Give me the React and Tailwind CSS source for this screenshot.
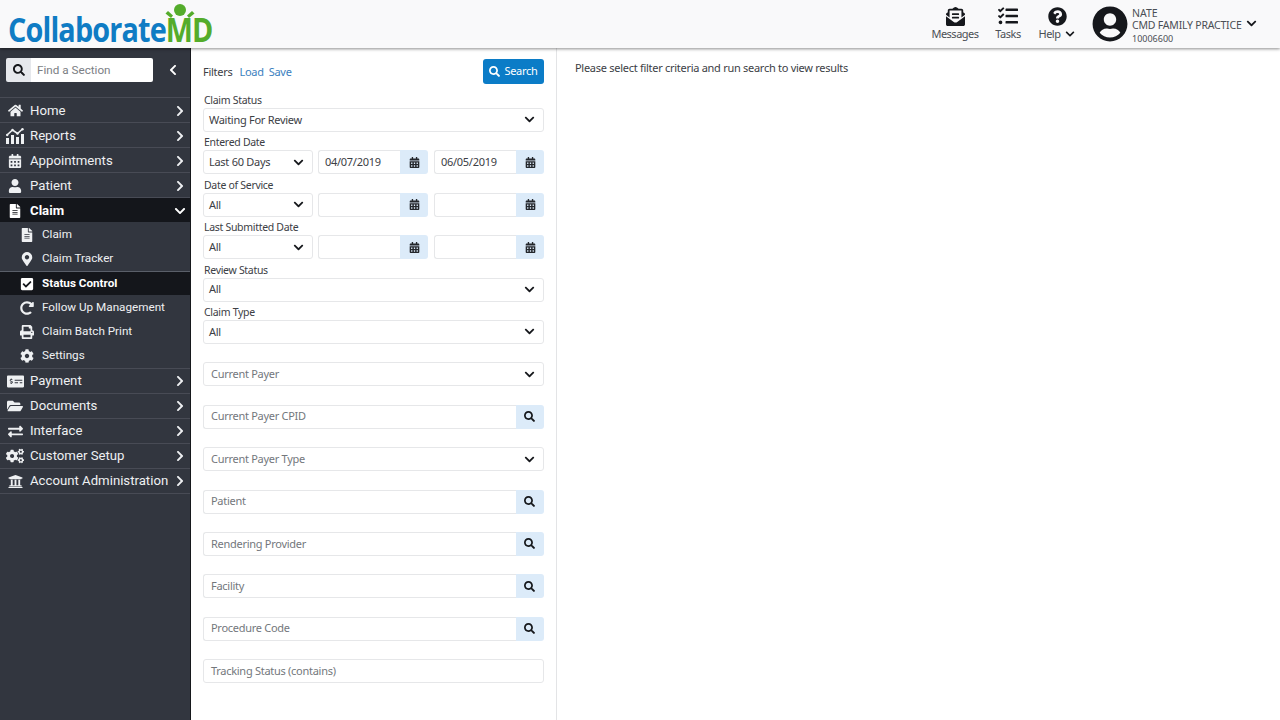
import React from "react";
import { FaHome, FaCalendarAlt, FaUser, FaFileAlt, FaMapMarkerAlt, FaCheckSquare, FaRedoAlt, FaPrint, FaCog, FaMoneyCheckAlt, FaFolderOpen, FaExchangeAlt, FaCogs, FaUniversity, FaEnvelopeOpenText, FaTasks, FaQuestionCircle, FaUserCircle, FaSearch, FaChevronRight, FaChevronDown, FaChevronLeft } from "react-icons/fa";

const plex = "font-['Noto_Sans',sans-serif]";

function ReportsIcon() {
  return (
    <svg viewBox="0 0 18 16" className="w-[18px] h-[16px]" fill="currentColor">
      <rect x="0" y="10" width="3" height="6" />
      <rect x="5" y="7" width="3" height="9" />
      <rect x="10" y="9" width="3" height="7" />
      <rect x="15" y="6" width="3" height="10" />
      <path d="M1 7 L6.5 2 L11.5 5.5 L16.5 1" fill="none" stroke="currentColor" strokeWidth="1.6" />
      <circle cx="1.2" cy="7" r="1.2" />
      <circle cx="6.5" cy="2" r="1.2" />
      <circle cx="11.5" cy="5.5" r="1.2" />
      <circle cx="16.5" cy="1.2" r="1.2" />
    </svg>
  );
}

function Logo() {
  return (
    <div className="relative ml-2 mt-[3px] h-[45px] w-[206px]">
      <div className="absolute left-0 top-[6px] text-[33.5px] leading-[40px] font-bold tracking-[-1px] font-['Open_Sans',sans-serif] whitespace-nowrap scale-x-[0.86] origin-left">
        <span className="text-[#0f7cc4]">Collaborate</span>
        <span className="text-[#54ac2b]">MD</span>
      </div>
      <svg viewBox="0 0 30 22" className="absolute left-[157px] top-[0px] w-[30px] h-[22px]" fill="#54ac2b">
        <circle cx="15" cy="7" r="6" />
        <path d="M0.5 10.5 L3 8 L8 12.5 L6 15 Z" />
        <path d="M29.5 10.5 L27 8 L22 12.5 L24 15 Z" />
      </svg>
    </div>
  );
}

function TopAction({ icon, label, chevron, w }) {
  return (
    <div className={`flex flex-col items-center ${w}`}>
      <span className="h-[20px] flex items-center text-[#16181c]">{icon}</span>
      <span className="text-[11px] tracking-[-0.5px] leading-[14px] text-[#4b4f55] mt-[1px] flex items-center gap-[5px]">
        {label}
        {chevron && <FaChevronDown className="text-[10px] text-[#16181c]" />}
      </span>
    </div>
  );
}

function Header() {
  return (
    <header className={`h-[48px] shrink-0 bg-[#f9f9fa] flex justify-between shadow-[0_1px_3px_rgba(0,0,0,0.45)] relative z-10 ${plex}`}>
      <Logo />
      <div className="flex items-start pt-[6px] gap-[15px]">
        <TopAction w="w-[48px]" label="Messages" icon={<FaEnvelopeOpenText className="text-[19px]" />} />
        <TopAction w="w-[28px]" label="Tasks" icon={<FaTasks className="text-[20px]" />} />
        <TopAction w="w-[40px]" label="Help" chevron icon={<FaQuestionCircle className="text-[19px]" />} />
        <div className="flex">
          <FaUserCircle className="text-[36px] text-[#16181c]" />
          <div className="ml-[4px] w-[148px] relative text-[#4b4f55]">
            <div className="text-[10.5px] leading-[12px] mt-[1px]">NATE</div>
            <div className="text-[10.5px] tracking-[-0.2px] leading-[13px]">CMD FAMILY PRACTICE</div>
            <div className="text-[9px] leading-[13px]">10006600</div>
            <FaChevronDown className="absolute left-[114px] top-[12px] text-[11px] text-[#16181c]" />
          </div>
        </div>
      </div>
    </header>
  );
}

function MainItem({ icon, label, open }) {
  return (
    <div className={`flex items-center h-[25px] pt-[1px] border-t border-[#484b55] pl-[6px] pr-[4px] text-[13.2px] ${open ? "bg-[#14161b] font-bold text-white" : "text-[#eef0f2]"}`}>
      <span className="w-[18px] flex justify-center shrink-0">{icon}</span>
      <span className="ml-[6px] flex-1 whitespace-nowrap">{label}</span>
      {open ? <FaChevronDown className="text-[12px]" /> : <FaChevronRight className="text-[12px]" />}
    </div>
  );
}

function SubItem({ icon, label, active }) {
  return (
    <div className={`flex items-center h-[24.3px] pt-[1px] pl-[19px] text-[11.7px] ${active ? "bg-[#14161b] font-bold text-white border-t border-[#5a5f69]" : "text-[#eef0f2]"}`}>
      <span className="w-[16px] flex justify-center shrink-0 text-[14px]">{icon}</span>
      <span className="ml-[7px] whitespace-nowrap">{label}</span>
    </div>
  );
}

function Sidebar() {
  return (
    <aside className="w-[191px] shrink-0 bg-[#32363f] border-r border-[#16181c] font-['Roboto',sans-serif]">
      <div className="h-[49px] flex items-start pt-[10px] pl-[6px]">
        <div className="flex h-[24px] w-[147px] rounded-[2px] overflow-hidden">
          <span className="w-[25px] bg-[#e6e8ec] flex items-center justify-center text-[#16181c]"><FaSearch className="text-[12px]" /></span>
          <span className="flex-1 bg-white text-[11.7px] leading-[24px] pl-[6px] text-[#7b7e83]">Find a Section</span>
        </div>
        <FaChevronLeft className="text-[12px] text-white ml-[14px] mt-[6px]" />
      </div>
      <MainItem icon={<FaHome className="text-[15px]" />} label="Home" />
      <MainItem icon={<ReportsIcon />} label="Reports" />
      <MainItem icon={<FaCalendarAlt className="text-[14px]" />} label="Appointments" />
      <MainItem icon={<FaUser className="text-[14px]" />} label="Patient" />
      <MainItem icon={<FaFileAlt className="text-[14px]" />} label="Claim" open />
      <SubItem icon={<FaFileAlt />} label="Claim" />
      <SubItem icon={<FaMapMarkerAlt />} label="Claim Tracker" />
      <SubItem icon={<FaCheckSquare />} label="Status Control" active />
      <SubItem icon={<FaRedoAlt />} label="Follow Up Management" />
      <SubItem icon={<FaPrint />} label="Claim Batch Print" />
      <SubItem icon={<FaCog />} label="Settings" />
      <MainItem icon={<FaMoneyCheckAlt className="text-[17px]" />} label="Payment" />
      <MainItem icon={<FaFolderOpen className="text-[16px]" />} label="Documents" />
      <MainItem icon={<FaExchangeAlt className="text-[15px]" />} label="Interface" />
      <MainItem icon={<FaCogs className="text-[18px]" />} label="Customer Setup" />
      <MainItem icon={<FaUniversity className="text-[15px]" />} label="Account Administration" />
      <div className="border-t border-[#484b55]" />
    </aside>
  );
}

const text = "text-[11px] tracking-[-0.28px]";
const box = `h-[24px] bg-white border border-[#e6e7e9] rounded-[3px] flex items-center ${text}`;

function Select({ value, placeholder, className = "" }) {
  return (
    <div className={`${box} pl-[5px] pr-[8px] justify-between ${className}`}>
      <span className={placeholder ? "text-[#73777c] pl-[2px]" : "text-[#3c4045]"}>{value}</span>
      <FaChevronDown className="text-[11px] text-[#16181c]" />
    </div>
  );
}

function Addon({ children }) {
  return <span className="w-[28px] h-[24px] bg-[#dcebf9] rounded-r-[3px] flex items-center justify-center text-[#16181c]">{children}</span>;
}

function DateInput({ value, className }) {
  return (
    <div className={`flex w-[110px] ${className}`}>
      <div className={`h-[24px] flex-1 flex items-center bg-white border border-r-0 border-[#e6e7e9] rounded-l-[3px] pl-[6px] text-[#3c4045] ${text}`}>{value}</div>
      <Addon><FaCalendarAlt className="text-[11px] text-[#24272c]" /></Addon>
    </div>
  );
}

function SearchInput({ placeholder }) {
  return (
    <div className="flex">
      <div className={`h-[24px] flex-1 flex items-center bg-white border border-r-0 border-[#e6e7e9] rounded-l-[3px] pl-[7px] text-[#73777c] ${text}`}>{placeholder}</div>
      <Addon><FaSearch className="text-[11px] -ml-[1px]" /></Addon>
    </div>
  );
}

function Labeled({ label, children }) {
  return (
    <div className="h-[42.4px] flex flex-col justify-end">
      <div className="text-[10.5px] tracking-[-0.3px] leading-[14px] mb-[1px] pl-[1px] text-[#3c4045]">{label}</div>
      {children}
    </div>
  );
}

function DateRow({ label, sel, from, to }) {
  return (
    <Labeled label={label}>
      <div className="flex">
        <Select value={sel} className="w-[110px]" />
        <DateInput value={from} className="ml-[5px]" />
        <DateInput value={to} className="ml-[6px]" />
      </div>
    </Labeled>
  );
}

function Spaced({ children }) {
  return <div className="h-[42.4px] flex flex-col justify-end">{children}</div>;
}

function Filters() {
  return (
    <section className={`w-[366px] shrink-0 border-r border-[#e3e4e6] pl-[12px] pr-[12px] pt-[11px] ${plex}`}>
      <div className="flex items-center justify-between h-[25px]">
        <div className={`flex pt-[2px] ${text}`}>
          <span className="text-[#3c4045]">Filters</span>
          <span className="text-[#3b7fc0] ml-[7px]">Load</span>
          <span className="text-[#3b7fc0] ml-[5px]">Save</span>
        </div>
        <div className={`h-[25px] w-[61px] rounded-[3px] bg-[#0b7cc7] text-white flex items-center justify-center gap-[4px] ${text}`}>
          <FaSearch className="text-[11px]" /> Search
        </div>
      </div>
      <div className="mt-[5.6px]">
        <Labeled label="Claim Status"><Select value="Waiting For Review" /></Labeled>
        <DateRow label="Entered Date" sel="Last 60 Days" from="04/07/2019" to="06/05/2019" />
        <DateRow label="Date of Service" sel="All" />
        <DateRow label="Last Submitted Date" sel="All" />
        <Labeled label="Review Status"><Select value="All" /></Labeled>
        <Labeled label="Claim Type"><Select value="All" /></Labeled>
        <Spaced><Select value="Current Payer" placeholder /></Spaced>
        <Spaced><SearchInput placeholder="Current Payer CPID" /></Spaced>
        <Spaced><Select value="Current Payer Type" placeholder /></Spaced>
        <Spaced><SearchInput placeholder="Patient" /></Spaced>
        <Spaced><SearchInput placeholder="Rendering Provider" /></Spaced>
        <Spaced><SearchInput placeholder="Facility" /></Spaced>
        <Spaced><SearchInput placeholder="Procedure Code" /></Spaced>
        <Spaced>
          <div className={box}><span className="pl-[7px] text-[#73777c]">Tracking Status (contains)</span></div>
        </Spaced>
      </div>
    </section>
  );
}

export default function App() {
  return (
    <div className="w-[1280px] h-[720px] overflow-hidden flex flex-col bg-white">
      <Header />
      <div className="flex flex-1 min-h-0">
        <Sidebar />
        <Filters />
        <div className={`flex-1 pl-[18px] pt-[13px] leading-[14px] text-[#3c4045] ${text} ${plex}`}>
          Please select filter criteria and run search to view results
        </div>
      </div>
    </div>
  );
}
